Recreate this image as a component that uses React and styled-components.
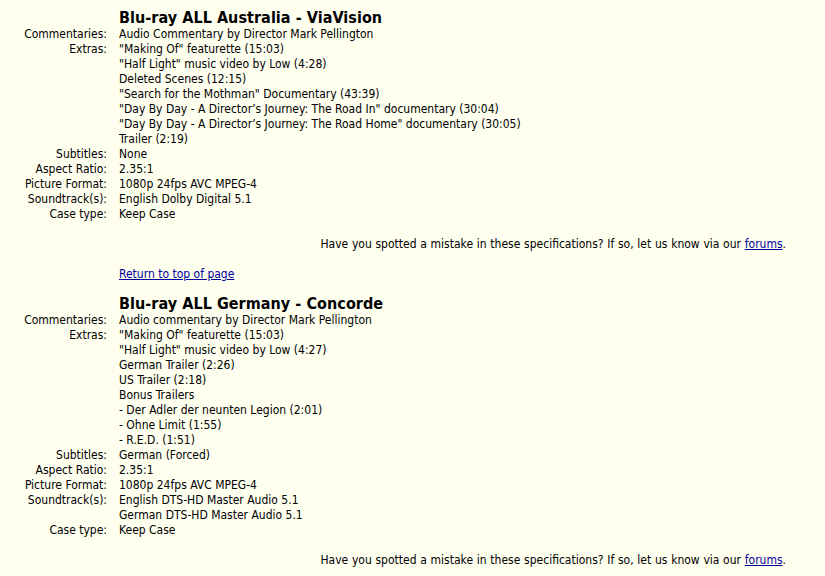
import React from "react"
import styled, { createGlobalStyle } from "styled-components"

const bg = "#FFFFF0"
const ink = "#000000"
const link = "#000099"
const font = `"DejaVu Sans Condensed", "Liberation Sans", sans-serif`

const Global = createGlobalStyle`
  html, body { background: ${bg}; margin: 0; }
  * { box-sizing: border-box; }
`

const Page = styled.div`
  background: ${bg};
  color: ${ink};
  font-family: ${font};
  font-size: 12px;
  line-height: 15px;
  padding: 9px 39px 0 0;
`

const Block = styled.div`
  margin-bottom: 13px;
`

const Specs = styled.div`
  display: grid;
  grid-template-columns: 107px 1fr;
  column-gap: 12px;
`

const Title = styled.div`
  grid-column: 2;
  font-weight: bold;
  font-size: 16px;
  line-height: 18px;
  letter-spacing: 0.05px;
`

const Label = styled.div`
  grid-column: 1;
  text-align: right;
  white-space: nowrap;
`

const Value = styled.div`
  grid-column: 2;
`

const Note = styled.div`
  text-align: right;
  margin-top: 15px;
  word-spacing: 0.3px;
`

const TopLink = styled.div`
  margin-top: 15px;
  padding-left: 119px;
`

const A = styled.a`
  color: ${link};
  text-decoration: underline;
`

const releases = [
  {
    title: "Blu-ray ALL Australia - ViaVision",
    specs: [
      ["Commentaries:", ["Audio Commentary by Director Mark Pellington"]],
      ["Extras:", [
        "\"Making Of\" featurette (15:03)",
        "\"Half Light\" music video by Low (4:28)",
        "Deleted Scenes (12:15)",
        "\"Search for the Mothman\" Documentary (43:39)",
        "\"Day By Day - A Director’s Journey: The Road In\" documentary (30:04)",
        "\"Day By Day - A Director’s Journey: The Road Home\" documentary (30:05)",
        "Trailer (2:19)",
      ]],
      ["Subtitles:", ["None"]],
      ["Aspect Ratio:", ["2.35:1"]],
      ["Picture Format:", ["1080p 24fps AVC MPEG-4"]],
      ["Soundtrack(s):", ["English Dolby Digital 5.1"]],
      ["Case type:", ["Keep Case"]],
    ],
  },
  {
    title: "Blu-ray ALL Germany - Concorde",
    specs: [
      ["Commentaries:", ["Audio commentary by Director Mark Pellington"]],
      ["Extras:", [
        "\"Making Of\" featurette (15:03)",
        "\"Half Light\" music video by Low (4:27)",
        "German Trailer (2:26)",
        "US Trailer (2:18)",
        "Bonus Trailers",
        "- Der Adler der neunten Legion (2:01)",
        "- Ohne Limit (1:55)",
        "- R.E.D. (1:51)",
      ]],
      ["Subtitles:", ["German (Forced)"]],
      ["Aspect Ratio:", ["2.35:1"]],
      ["Picture Format:", ["1080p 24fps AVC MPEG-4"]],
      ["Soundtrack(s):", ["English DTS-HD Master Audio 5.1", "German DTS-HD Master Audio 5.1"]],
      ["Case type:", ["Keep Case"]],
    ],
  },
]

export default function App() {
  return (
    <>
      <Global />
      <Page>
        {releases.map((r, idx) => (
          <Block key={r.title}>
            <Specs>
              <Title>{r.title}</Title>
              {r.specs.map(([label, lines]) => (
                <React.Fragment key={label}>
                  <Label>{label}</Label>
                  <Value>
                    {lines.map((l, i) => <div key={i}>{l}</div>)}
                  </Value>
                </React.Fragment>
              ))}
            </Specs>
            <Note>
              Have you spotted a mistake in these specifications? If so, let us know via our <A href="#">forums</A>.
            </Note>
            {idx < releases.length - 1 && (
              <TopLink><A href="#">Return to top of page</A></TopLink>
            )}
          </Block>
        ))}
      </Page>
    </>
  )
}
